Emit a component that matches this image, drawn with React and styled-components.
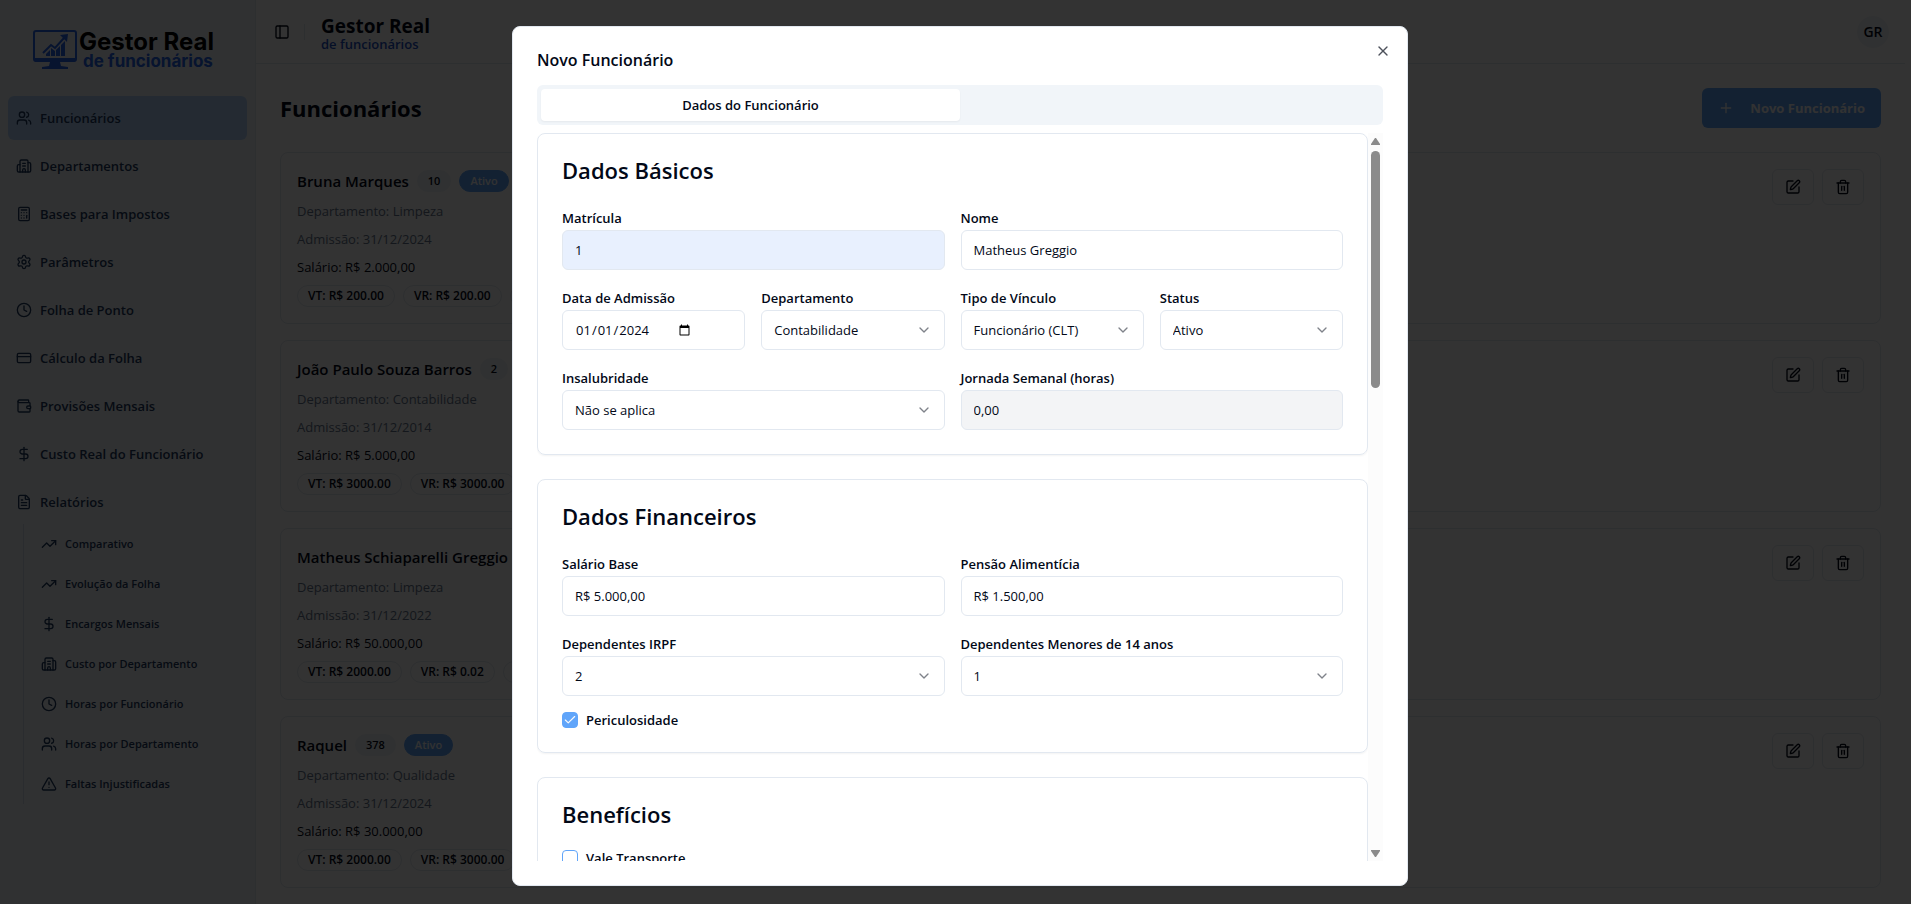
import React from 'react';
import styled, { createGlobalStyle, css } from 'styled-components';
import {
    Building2,
    Calculator,
    Check,
    ChevronDown,
    Clock,
    CreditCard,
    DollarSign,
    FileText,
    PanelLeft,
    Plus,
    Settings,
    SquarePen,
    Trash2,
    TrendingUp,
    TriangleAlert,
    Users,
    Wallet,
    X,
} from 'lucide-react';

const GlobalStyle = createGlobalStyle`
    *, *::before, *::after {
        box-sizing: border-box;
    }
    html, body {
        margin: 0;
        height: 100%;
        overflow: hidden;
    }
    body {
        font-family: "Open Sans", "Noto Sans", sans-serif;
        font-size: 14px;
        line-height: 20px;
        color: #020817;
        background: #fff;
    }
    button, input, select {
        font: inherit;
        color: inherit;
    }
    h1, h2, h3, p, ul {
        margin: 0;
        padding: 0;
    }
    ul {
        list-style: none;
    }
`;

/* page */

const Page = styled.div`
    display: flex;
    height: 100vh;
    padding-right: 6px;
    overflow: hidden;
`;

const Sidebar = styled.aside`
    flex: none;
    width: 256px;
    background: #f1f5f9;
    border-right: 1px solid #e2e8f0;
`;

const LogoBox = styled.div`
    display: flex;
    align-items: center;
    gap: 2px;
    height: 96px;
    padding: 4px 0 0 33px;
`;

const LogoText = styled.div`
    display: flex;
    flex-direction: column;
    font-family: Inter, sans-serif;
    font-weight: 700;
    color: #000;
    font-size: 24px;
    line-height: 22px;
`;

const LogoSub = styled.span`
    padding-left: 4px;
    font-size: 17px;
    line-height: 16px;
    color: #2563eb;
`;

const Menu = styled.ul`
    display: flex;
    flex-direction: column;
    gap: 4px;
    padding: 0 8px;
`;

const MenuLink = styled.a`
    display: flex;
    align-items: center;
    gap: 8px;
    height: 44px;
    padding: 0 8px;
    border-radius: 6px;
    font-size: 13px;
    font-weight: 600;
    color: #1e3a5f;
    text-decoration: none;
    background: ${props => (props.$active ? '#b4d3fb' : 'transparent')};
`;

const SubMenu = styled.ul`
    margin-left: 23px;
    border-left: 1px solid #d3dce8;
`;

const SubLink = styled.a`
    display: flex;
    align-items: center;
    gap: 8px;
    height: 40px;
    padding: 0 17px;
    font-size: 11px;
    font-weight: 600;
    color: #1e3a5f;
    text-decoration: none;
`;

const Main = styled.main`
    flex: 1;
    min-width: 0;
`;

const TopBar = styled.header`
    display: flex;
    align-items: center;
    height: 64px;
    padding: 0 16px;
    border-bottom: 1px solid #e2e8f0;
`;

const IconButton = styled.button`
    display: flex;
    align-items: center;
    justify-content: center;
    width: 20px;
    height: 28px;
    padding: 0;
    border: 0;
    background: none;
`;

const Divider = styled.span`
    width: 1px;
    height: 16px;
    margin: 0 16px 0 12px;
    background: #e2e8f0;
`;

const Brand = styled.div`
    display: flex;
    flex-direction: column;
    font-size: 19px;
    font-weight: 700;
    line-height: 24px;
`;

const BrandSub = styled.span`
    font-size: 13px;
    font-weight: 600;
    line-height: 12px;
    color: #1d4fc4;
`;

const Avatar = styled.span`
    display: flex;
    align-items: center;
    justify-content: center;
    width: 32px;
    height: 32px;
    margin-left: auto;
    border-radius: 50%;
    font-weight: 600;
    background: #f1f5f9;
`;

const Content = styled.div`
    display: flex;
    flex-direction: column;
    gap: 24px;
    padding: 24px;
`;

const Heading = styled.div`
    display: flex;
    align-items: center;
    justify-content: space-between;
`;

const PageTitle = styled.h1`
    font-size: 22px;
    font-weight: 700;
    line-height: 40px;
`;

const PrimaryButton = styled.button`
    display: flex;
    align-items: center;
    gap: 16px;
    height: 40px;
    padding: 0 16px;
    border: 0;
    border-radius: 6px;
    font-size: 13px;
    font-weight: 700;
    color: #f8fafc;
    background: #60a5fa;
`;

const EmployeeList = styled.div`
    display: flex;
    flex-direction: column;
    gap: 16px;
`;

const EmployeeCard = styled.article`
    display: flex;
    justify-content: space-between;
    padding: 16px;
    border: 1px solid #e2e8f0;
    border-radius: 8px;
`;

const EmployeeInfo = styled.div`
    display: flex;
    flex-direction: column;
    gap: 8px;
`;

const Row = styled.div`
    display: flex;
    align-items: center;
    gap: 8px;
`;

const EmployeeName = styled.h3`
    font-size: 15px;
    font-weight: 600;
    line-height: 24px;
    white-space: nowrap;
`;

const Line = styled.p`
    font-size: 13px;
    line-height: 20px;
    color: ${props => (props.$muted ? '#64748b' : '#020817')};
`;

const badgeKinds = {
    id: css`
        font-size: 11px;
        background: #f1f5f9;
        border-color: #f1f5f9;
    `,
    status: css`
        font-size: 11px;
        color: #f8fafc;
        background: #60a5fa;
        border-color: #60a5fa;
    `,
    outline: css`
        min-width: 80px;
        font-size: 12px;
        border-color: #e2e8f0;
    `,
};

const Badge = styled.span`
    height: 22px;
    padding: 2px 10px;
    border: 1px solid;
    border-radius: 11px;
    font-weight: 600;
    line-height: 16px;
    white-space: nowrap;
    ${props => badgeKinds[props.$kind]}
`;

const Actions = styled.div`
    display: flex;
    gap: 8px;
`;

const OutlineButton = styled.button`
    display: flex;
    align-items: center;
    justify-content: center;
    width: 42px;
    height: 36px;
    padding: 0;
    border: 1px solid #e2e8f0;
    border-radius: 6px;
    background: #fff;
`;

/* dialog */

const Overlay = styled.div`
    position: fixed;
    inset: 0;
    display: flex;
    justify-content: center;
    padding: 26px 0 18px 9px;
    background: rgba(0, 0, 0, 0.8);
`;

const Dialog = styled.section`
    position: relative;
    display: flex;
    flex-direction: column;
    width: 100%;
    max-width: 896px;
    padding: 24px;
    border: 1px solid #e2e8f0;
    border-radius: 8px;
    background: #fff;
`;

const CloseButton = styled.button`
    position: absolute;
    top: 16px;
    right: 16px;
    display: flex;
    padding: 0;
    border: 0;
    background: none;
    opacity: 0.7;
`;

const DialogTitle = styled.h2`
    margin-bottom: 16px;
    font-size: 16px;
    font-weight: 600;
    line-height: 18px;
`;

const Tabs = styled.div`
    display: grid;
    grid-template-columns: 1fr 1fr;
    flex: none;
    height: 40px;
    margin-bottom: 8px;
    padding: 4px;
    border-radius: 6px;
    background: #f1f5f9;
`;

const Tab = styled.button`
    border: 0;
    border-radius: 4px;
    font-size: 13px;
    font-weight: 600;
    background: #fff;
    box-shadow: 0 1px 2px rgba(0, 0, 0, 0.05);
`;

const ScrollArea = styled.div`
    display: flex;
    flex: 1;
    min-height: 0;
`;

const Form = styled.form`
    display: flex;
    flex: 1;
    flex-direction: column;
    gap: 24px;
    min-width: 0;
    overflow: hidden;
`;

const ScrollBar = styled.div`
    display: flex;
    flex-direction: column;
    align-items: center;
    width: 15px;
    padding: 5px 0 4px;
    background: #fcfcfc;
`;

const Thumb = styled.div`
    width: 9px;
    height: 33%;
    margin: 6px 0 auto;
    border-radius: 5px;
    background: #8b8b8b;
`;

const Card = styled.fieldset`
    flex: none;
    min-width: 0;
    margin: 0;
    padding: 24px;
    border: 1px solid #e2e8f0;
    border-radius: 8px;
    box-shadow: 0 1px 2px rgba(0, 0, 0, 0.05);
`;

const CardTitle = styled.h3`
    margin-bottom: 24px;
    font-size: 22px;
    font-weight: 600;
    line-height: 24px;
`;

const Fields = styled.div`
    display: grid;
    grid-template-columns: repeat(4, 1fr);
    gap: 16px;
`;

const FieldBox = styled.div`
    grid-column: span ${props => props.$span};
    min-width: 0;
`;

const Label = styled.label`
    display: block;
    font-size: 13px;
    font-weight: 600;
    line-height: 24px;
`;

const control = css`
    display: block;
    width: 100%;
    height: 40px;
    margin: 0;
    padding: 0 12px;
    border: 1px solid #e2e8f0;
    border-radius: 6px;
    font-size: 13px;
    color: #020817;
    background: #fff;
`;

const Input = styled.input`
    ${control}
    background: ${props => props.$fill || '#fff'};

    &[type='date'] {
        display: flex;
        align-items: center;
    }
    &::-webkit-datetime-edit {
        flex: none;
    }
`;

const SelectBox = styled.div`
    position: relative;

    svg {
        position: absolute;
        top: 12px;
        right: 13px;
        opacity: 0.5;
        pointer-events: none;
    }
`;

const Select = styled.select`
    ${control}
    appearance: none;
`;

const CheckRow = styled.div`
    display: flex;
    grid-column: 1 / -1;
    align-items: center;
    gap: 8px;
    height: 16px;
`;

const CheckBox = styled.span`
    display: grid;
    flex: none;
    width: 16px;
    height: 16px;

    input,
    svg {
        grid-area: 1 / 1;
        margin: 0;
    }
    input {
        width: 16px;
        height: 16px;
        appearance: none;
        border: 1px solid #60a5fa;
        border-radius: 4px;
    }
    input:checked {
        background: #60a5fa;
    }
    svg {
        place-self: center;
        color: #f8fafc;
        pointer-events: none;
    }
`;

const menu = [
    { label: 'Funcionários', icon: Users, active: true },
    { label: 'Departamentos', icon: Building2 },
    { label: 'Bases para Impostos', icon: Calculator },
    { label: 'Parâmetros', icon: Settings },
    { label: 'Folha de Ponto', icon: Clock },
    { label: 'Cálculo da Folha', icon: CreditCard },
    { label: 'Provisões Mensais', icon: Wallet },
    { label: 'Custo Real do Funcionário', icon: DollarSign },
    { label: 'Relatórios', icon: FileText },
];

const reports = [
    { label: 'Comparativo', icon: TrendingUp },
    { label: 'Evolução da Folha', icon: TrendingUp },
    { label: 'Encargos Mensais', icon: DollarSign },
    { label: 'Custo por Departamento', icon: Building2 },
    { label: 'Horas por Funcionário', icon: Clock },
    { label: 'Horas por Departamento', icon: Users },
    { label: 'Faltas Injustificadas', icon: TriangleAlert },
];

const employees = [
    { id: 10, name: 'Bruna Marques', dept: 'Limpeza', date: '31/12/2024', salary: '2.000,00', vt: '200.00', vr: '200.00' },
    { id: 2, name: 'João Paulo Souza Barros', dept: 'Contabilidade', date: '31/12/2014', salary: '5.000,00', vt: '3000.00', vr: '3000.00' },
    { name: 'Matheus Schiaparelli Greggio', dept: 'Limpeza', date: '31/12/2022', salary: '50.000,00', vt: '2000.00', vr: '0.02' },
    { id: 378, name: 'Raquel', dept: 'Qualidade', date: '31/12/2024', salary: '30.000,00', vt: '2000.00', vr: '3000.00' },
];

const LogoMark = () => (
    <svg width="44" height="40" viewBox="0 0 44 40" fill="#2563eb">
        <rect x="1" y="1" width="42" height="30" rx="2" fill="none" stroke="#2563eb" strokeWidth="2" />
        <path d="M1 28h42v1a3 3 0 0 1-3 3H4a3 3 0 0 1-3-3z" />
        <path d="M17 32h10l1 4 7 1v2H9v-2l7-1z" />
        <path d="M10 23l8-8 4 3 9-10" fill="none" stroke="#2563eb" strokeWidth="2" />
        <path d="M27 5l8-1-1 8z" />
        <path d="M13 26v-2l4-4v6zM18 26v-8l4 3v5zM23 26v-6l4-4v10zM28 26V15l4-4v15z" />
    </svg>
);

const Employee = ({ data }) => (
    <EmployeeCard>
        <EmployeeInfo>
            <Row>
                <EmployeeName>{data.name}</EmployeeName>
                {data.id && <Badge $kind="id">{data.id}</Badge>}
                {data.id && <Badge $kind="status">Ativo</Badge>}
            </Row>
            <Line $muted>Departamento: {data.dept}</Line>
            <Line $muted>Admissão: {data.date}</Line>
            <Line>Salário: R$ {data.salary}</Line>
            <Row>
                <Badge $kind="outline">VT: R$ {data.vt}</Badge>
                <Badge $kind="outline">VR: R$ {data.vr}</Badge>
                <Badge $kind="outline" />
            </Row>
        </EmployeeInfo>
        <Actions>
            <OutlineButton aria-label="Editar"><SquarePen size={16} /></OutlineButton>
            <OutlineButton aria-label="Excluir"><Trash2 size={16} /></OutlineButton>
        </Actions>
    </EmployeeCard>
);

const Field = ({ id, label, span = 2, options, ...rest }) => (
    <FieldBox $span={span}>
        <Label htmlFor={id}>{label}</Label>
        {options ? (
            <SelectBox>
                <Select id={id}>
                    {options.map(option => <option key={option}>{option}</option>)}
                </Select>
                <ChevronDown size={16} />
            </SelectBox>
        ) : (
            <Input id={id} {...rest} />
        )}
    </FieldBox>
);

const CheckField = ({ id, label, checked }) => (
    <CheckRow>
        <CheckBox>
            <input id={id} type="checkbox" defaultChecked={checked} />
            {checked && <Check size={14} />}
        </CheckBox>
        <Label htmlFor={id}>{label}</Label>
    </CheckRow>
);

const App = () => {

    return (
        <>
            <GlobalStyle />
            <Page>
                <Sidebar>
                    <LogoBox>
                        <LogoMark />
                        <LogoText>
                            Gestor Real
                            <LogoSub>de funcionários</LogoSub>
                        </LogoText>
                    </LogoBox>
                    <Menu>
                        {menu.map(({ label, icon: Icon, active }) => (
                            <li key={label}>
                                <MenuLink href="#" $active={active}><Icon size={16} />{label}</MenuLink>
                            </li>
                        ))}
                    </Menu>
                    <SubMenu>
                        {reports.map(({ label, icon: Icon }) => (
                            <li key={label}>
                                <SubLink href="#"><Icon size={16} />{label}</SubLink>
                            </li>
                        ))}
                    </SubMenu>
                </Sidebar>
                <Main>
                    <TopBar>
                        <IconButton aria-label="Menu"><PanelLeft size={16} /></IconButton>
                        <Divider />
                        <Brand>
                            Gestor Real
                            <BrandSub>de funcionários</BrandSub>
                        </Brand>
                        <Avatar>GR</Avatar>
                    </TopBar>
                    <Content>
                        <Heading>
                            <PageTitle>Funcionários</PageTitle>
                            <PrimaryButton><Plus size={16} />Novo Funcionário</PrimaryButton>
                        </Heading>
                        <EmployeeList>
                            {employees.map(data => <Employee key={data.name} data={data} />)}
                        </EmployeeList>
                    </Content>
                </Main>
            </Page>
            <Overlay>
                <Dialog role="dialog" aria-labelledby="dialog-title">
                    <DialogTitle id="dialog-title">Novo Funcionário</DialogTitle>
                    <CloseButton aria-label="Fechar"><X size={16} /></CloseButton>
                    <Tabs role="tablist">
                        <Tab role="tab" aria-selected="true">Dados do Funcionário</Tab>
                    </Tabs>
                    <ScrollArea>
                        <Form>
                            <Card>
                                <CardTitle>Dados Básicos</CardTitle>
                                <Fields>
                                    <Field id="matricula" label="Matrícula" defaultValue="1" $fill="#e8f0fe" />
                                    <Field id="nome" label="Nome" defaultValue="Matheus Greggio" />
                                    <Field id="admissao" label="Data de Admissão" span={1} type="date" defaultValue="2024-01-01" />
                                    <Field id="departamento" label="Departamento" span={1} options={['Contabilidade']} />
                                    <Field id="vinculo" label="Tipo de Vínculo" span={1} options={['Funcionário (CLT)']} />
                                    <Field id="status" label="Status" span={1} options={['Ativo']} />
                                    <Field id="insalubridade" label="Insalubridade" options={['Não se aplica']} />
                                    <Field id="jornada" label="Jornada Semanal (horas)" defaultValue="0,00" readOnly $fill="#f3f4f6" />
                                </Fields>
                            </Card>
                            <Card>
                                <CardTitle>Dados Financeiros</CardTitle>
                                <Fields>
                                    <Field id="salario" label="Salário Base" defaultValue="R$ 5.000,00" />
                                    <Field id="pensao" label="Pensão Alimentícia" defaultValue="R$ 1.500,00" />
                                    <Field id="irpf" label="Dependentes IRPF" options={['2']} />
                                    <Field id="menores" label="Dependentes Menores de 14 anos" options={['1']} />
                                    <CheckField id="periculosidade" label="Periculosidade" checked />
                                </Fields>
                            </Card>
                            <Card>
                                <CardTitle>Benefícios</CardTitle>
                                <Fields>
                                    <CheckField id="vale" label="Vale Transporte" />
                                </Fields>
                            </Card>
                        </Form>
                        <ScrollBar>
                            <svg width="9" height="7" viewBox="0 0 9 7" fill="#8b8b8b"><path d="M4 0h1l4 6v1H0V6z" /></svg>
                            <Thumb />
                            <svg width="9" height="7" viewBox="0 0 9 7" fill="#8b8b8b"><path d="M0 0h9v1L5 7H4L0 1z" /></svg>
                        </ScrollBar>
                    </ScrollArea>
                </Dialog>
            </Overlay>
        </>
    );
};

export default App;
